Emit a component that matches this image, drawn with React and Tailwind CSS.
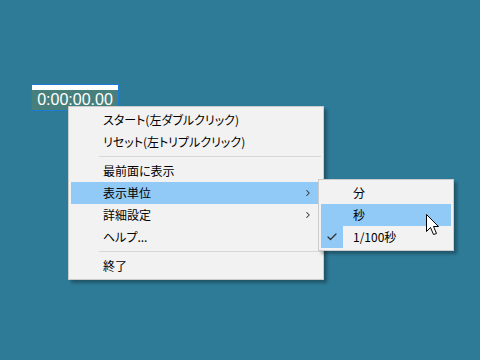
import { Check, ChevronRight } from 'lucide-react';

const menuFont = {
  fontFamily: '"Noto Sans CJK JP", "Noto Sans", sans-serif',
};

function Item({ label, active, submenu }) {
  return (
    <div
      className={`flex h-[22px] items-center pl-[32px] pr-[8px] text-[12px] leading-none text-black [font-feature-settings:'palt'] ${
        active ? 'bg-[#91c9f7]' : ''
      }`}
    >
      <span className="flex-1">{label}</span>
      {submenu && <ChevronRight className="h-[10px] w-[10px] text-[#333]" strokeWidth={2.5} />}
    </div>
  );
}

function Separator() {
  return (
    <div className="flex h-[7px] items-center pl-[28px]">
      <div className="h-px w-full bg-[#d7d7d7]" />
    </div>
  );
}

function SubItem({ label, active, checked }) {
  return (
    <div
      className={`flex h-[22px] items-center text-[12px] leading-none text-black [font-feature-settings:'palt'] ${
        active ? 'bg-[#91c9f7]' : ''
      }`}
    >
      <div
        className={`flex h-[22px] w-[22px] items-center justify-center ${
          checked ? 'bg-[#91c9f7]' : ''
        }`}
      >
        {checked && <Check className="h-[12px] w-[12px] text-[#333]" strokeWidth={2.5} />}
      </div>
      <span className="pl-[10px]">{label}</span>
    </div>
  );
}

export default function App() {
  return (
    <div className="relative h-[360px] w-[480px] overflow-hidden bg-[#2e7b98]" style={menuFont}>
      {/* timer widget */}
      <div className="absolute left-[31px] top-[84px] flex h-[27px] w-[88px] flex-col border border-[#1e7ad4]">
        <div className="h-[5px] bg-white" />
        <div
          className="flex flex-1 items-center justify-center bg-[#477f7d] text-[16px] leading-none text-white"
          style={{ fontFamily: '"Liberation Sans", Arial, sans-serif' }}
        >
          0:00:00.00
        </div>
      </div>

      {/* context menu */}
      <div className="absolute left-[68px] top-[106px] w-[256px] border border-[#cccccc] bg-[#f2f2f2] p-[2px] shadow-[3px_3px_3px_rgba(0,0,0,0.3)]">
        <Item label="スタート(左ダブルクリック)" />
        <Item label="リセット(左トリプルクリック)" />
        <Separator />
        <Item label="最前面に表示" />
        <Item label="表示単位" active submenu />
        <Item label="詳細設定" submenu />
        <Item label="ヘルプ..." />
        <Separator />
        <Item label="終了" />
      </div>

      {/* submenu */}
      <div className="absolute left-[318px] top-[179px] w-[136px] border border-[#cccccc] bg-[#f2f2f2] p-[2px] shadow-[3px_3px_3px_rgba(0,0,0,0.3)]">
        <SubItem label="分" />
        <SubItem label="秒" active />
        <SubItem label="1/100秒" checked />
      </div>

      {/* mouse cursor */}
      <svg className="absolute left-[426px] top-[214px]" width="14" height="23" viewBox="0 0 14 23">
        <path
          d="M0.5 0.5 L0.5 17.5 L4.5 13.5 L7.5 20.5 L10.5 19.5 L7.5 12.5 L12.5 12.5 Z"
          fill="white"
          stroke="black"
          strokeWidth="1"
          strokeLinejoin="miter"
        />
      </svg>
    </div>
  );
}
